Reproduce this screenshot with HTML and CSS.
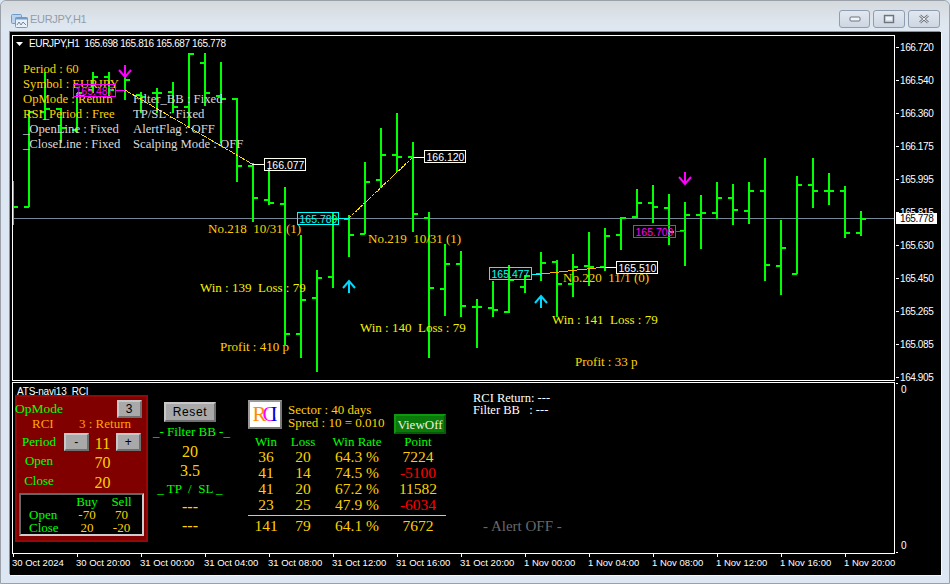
FILE: index.html
```html
<!DOCTYPE html>
<html lang="en">
<head>
<meta charset="utf-8">
<title>EURJPY,H1</title>
<link rel="stylesheet" href="styles.css">
</head>
<body>
<div class="window">
  <header class="titlebar">
    <svg class="app-icon" width="17" height="15" viewBox="0 0 17 15">
      <rect x="0.5" y="1.5" width="10" height="9" rx="1" fill="#b9d3ee" stroke="#6f9cc9"/>
      <rect x="4.5" y="4.5" width="12" height="10" rx="1" fill="#e6f0fa" stroke="#6f9cc9"/>
      <rect x="4.5" y="4.5" width="12" height="2" fill="#6f9cc9"/>
      <path d="M6 12 L8 9 L10 12 L12 9 L15 12" fill="none" stroke="#7b8794"/>
    </svg>
    <span class="title-text">EURJPY,H1</span>
    <div class="win-buttons">
      <div class="win-btn"><svg width="12" height="6" viewBox="0 0 12 6"><rect x="1" y="1" width="10" height="4" rx="1" fill="#f2f4f7" stroke="#6d747c"/></svg></div>
      <div class="win-btn"><svg width="12" height="10" viewBox="0 0 12 10"><rect x="1.5" y="1.5" width="9" height="7" fill="none" stroke="#6d747c" stroke-width="1.4"/><rect x="3" y="3" width="6" height="3" fill="#f2f4f7"/></svg></div>
      <div class="win-btn"><svg width="12" height="10" viewBox="0 0 12 10"><path d="M2 1.5 L10 8.5 M10 1.5 L2 8.5" stroke="#6d747c" stroke-width="2.6"/><path d="M2 1.5 L10 8.5 M10 1.5 L2 8.5" stroke="#f2f4f7" stroke-width="1"/></svg></div>
    </div>
  </header>

  <main class="client">
    <section class="pane pane-main">
      <svg class="chart" width="881" height="344" viewBox="13 36 881 344">
        <path class="price-line" d="M13 218.5H894"/>
        <path class="bars" d="M13 181V225M13 207H18
M29 110V207M24 207H29M29 112H34
M45 72V120M40 112H45M45 109H50
M61 108V143M56 109H61M61 128H66
M77 93V133M72 130H77M77 93H82
M93 72V93M88 90H93M93 77H98
M109 72V97M104 77H109M109 90H114
M125 75V100M125 80H130
M141 92V113M136 95H141M141 97H146
M157 88V113M152 93H157M157 93H162
M173 82V113M168 92H173M173 107H178
M189 53V127M184 107H189M189 54H194
M205 53V106M200 63H205M205 93H210
M221 62V143M216 96H221M221 99H226
M237 98V182M232 99H237M237 166H242
M253 163V222M248 166H253M253 198H258
M269 168V205M264 200H269M269 203H274
M285 187V345M280 204H285M285 334H290
M301 235V358M296 334H301M301 300H306
M317 270V372M312 298H317M317 278H322
M333 213V288M328 277H333M333 219H338
M349 215V257M344 219H349M349 235H354
M365 162V234M360 234H365M365 182H370
M381 128V188M376 180H381M381 155H386
M397 113V172M392 155H397M397 157H402
M413 142V232M408 157H413M413 214H418
M429 212V358M424 218H429M429 288H434
M445 244V316M440 289H445M445 264H450
M461 251V317M456 264H461M461 306H466
M477 299V348M472 307H477M477 307H482
M493 281V317M488 308H493M493 310H498
M509 265V313M504 312H509M509 280H514
M525 275V293M520 287H525M525 276H530
M541 252V281M536 274H541M541 263H546
M557 260V317M552 262H557M557 284H562
M573 254V297M568 284H573M573 267H578
M589 232V286M584 266H589M589 267H594
M605 228V271M600 267H605M605 236H610
M621 217V250M616 235H621M621 218H626
M637 189V218M632 217H637M637 203H642
M653 185V223M648 203H653M653 207H658
M669 194V245M664 208H669M669 232H674
M685 202V266M680 231H685M685 215H690
M701 195V249M696 215H701M701 213H706
M717 182V219M712 213H717M717 198H722
M733 184V225M728 198H733M733 210H738
M749 182V224M744 211H749M749 191H754
M765 158V281M760 191H765M765 265H770
M781 220V295M776 266H781M781 248H786
M797 176V274M792 274H797M797 185H802
M813 158V208M808 185H813M813 191H818
M829 173V205M824 191H829M829 191H834
M845 186V238M840 191H845M845 233H850
M861 211V236M856 233H861M861 219H866"/>

        <path class="trend trend-dotted" d="M125 90L252 164M349 218L413 157"/>
        <path class="trend trend-orange" d="M541 274L605 267"/>
        <path class="lead lead-magenta" d="M115 90.5H125M675 231.5H685"/>
        <path class="lead lead-white" d="M252 164.5H264M413 157.5H424M605 267.5H616"/>
        <path class="lead lead-cyan" d="M339 218.5H349M531 274.5H541"/>

        <path class="arrow arrow-down" d="M125 65V77M119 70L125 77L131 70"/>
        <path class="arrow arrow-down" d="M685 172V184M679 177L685 184L691 177"/>
        <path class="arrow arrow-up" d="M349 293V281M343 288L349 281L355 288"/>
        <path class="arrow arrow-up" d="M541 308V296M535 303L541 296L547 303"/>

        <polygon class="menu-tri" points="16,42 23,42 19.5,46"/>
        <text class="head-text" x="29" y="47">EURJPY,H1  165.698 165.816 165.687 165.778</text>

        <text class="note gold" x="23" y="73">Period : 60</text>
        <text class="note gold" x="23" y="88">Symbol : EURJPY</text>
        <text class="note gold" x="23" y="103">OpMode : Return</text>
        <text class="note gold" x="23" y="118">RSI_Period : Free</text>
        <text class="note silver" x="23" y="133">_OpenLine : Fixed</text>
        <text class="note silver" x="23" y="148">_CloseLine : Fixed</text>
        <text class="note silver" x="133" y="103">Filter_BB : Fixed</text>
        <text class="note silver" x="133" y="118">TP/SL : Fixed</text>
        <text class="note silver" x="133" y="133">AlertFlag : OFF</text>
        <text class="note silver" x="133" y="148">Scalping Mode : OFF</text>

        <rect class="box box-magenta" x="73.5" y="84.5" width="42" height="12"/>
        <text class="box-text tx-magenta" x="75.5" y="95">165.487</text>
        <rect class="box box-white" x="264.5" y="158.5" width="41" height="12"/>
        <text class="box-text tx-white" x="266.5" y="169">166.077</text>
        <rect class="box box-cyan" x="297.5" y="212.5" width="41" height="12"/>
        <text class="box-text tx-cyan" x="299.5" y="223">165.789</text>
        <rect class="box box-white" x="424.5" y="150.5" width="41" height="12"/>
        <text class="box-text tx-white" x="426.5" y="161">166.120</text>
        <rect class="box box-cyan" x="489.5" y="267.5" width="42" height="12"/>
        <text class="box-text tx-cyan" x="491.5" y="278">165.477</text>
        <rect class="box box-white" x="616.5" y="261.5" width="41" height="12"/>
        <text class="box-text tx-white" x="618.5" y="272">165.510</text>
        <rect class="box box-magenta" x="633.5" y="225.5" width="42" height="12"/>
        <text class="box-text tx-magenta" x="635.5" y="236">165.709</text>

        <text class="note amber" x="208" y="233">No.218  10/31 (1)</text>
        <text class="note yellow" x="200" y="292">Win : 139  Loss : 79</text>
        <text class="note amber" x="220" y="351">Profit : 410 p</text>
        <text class="note amber" x="368" y="243">No.219  10/31 (1)</text>
        <text class="note yellow" x="360" y="332">Win : 140  Loss : 79</text>
        <text class="note amber" x="563" y="282">No.220  11/1 (0)</text>
        <text class="note yellow" x="552" y="324">Win : 141  Loss : 79</text>
        <text class="note amber" x="575" y="366">Profit : 33 p</text>
      </svg>
    </section>

    <aside class="price-axis">
      <div class="p-label"><i class="tick"></i><span>166.720</span></div>
      <div class="p-label"><i class="tick"></i><span>166.540</span></div>
      <div class="p-label"><i class="tick"></i><span>166.360</span></div>
      <div class="p-label"><i class="tick"></i><span>166.175</span></div>
      <div class="p-label"><i class="tick"></i><span>165.995</span></div>
      <div class="p-label"><i class="tick"></i><span>165.815</span></div>
      <div class="p-label"><i class="tick"></i><span>165.630</span></div>
      <div class="p-label"><i class="tick"></i><span>165.450</span></div>
      <div class="p-label"><i class="tick"></i><span>165.265</span></div>
      <div class="p-label"><i class="tick"></i><span>165.085</span></div>
      <div class="p-label"><i class="tick"></i><span>164.905</span></div>
      <div class="current-price">165.778</div>
    </aside>

    <section class="pane pane-sub">
      <div class="sub-title">ATS-navi13  RCI</div>

      <div class="control">
        <div class="c-row c-row-mode">
          <span class="c-green c-mode">OpMode</span>
          <button class="gbtn gbtn-mode">3</button>
        </div>
        <div class="c-row c-row-rci">
          <span class="c-orange c-rci">RCI</span>
          <span class="c-orange c-ret">3 : Return</span>
        </div>
        <div class="c-row c-row-period">
          <span class="c-green c-label">Period</span>
          <button class="gbtn gbtn-step">-</button>
          <span class="c-gold c-value">11</span>
          <button class="gbtn gbtn-step">+</button>
        </div>
        <div class="c-row c-row-val">
          <span class="c-green c-label">Open</span>
          <span class="c-gold c-value c-offset">70</span>
        </div>
        <div class="c-row c-row-val">
          <span class="c-green c-label">Close</span>
          <span class="c-gold c-value c-offset">20</span>
        </div>
        <div class="levels">
          <span></span><span class="c-green lv-c">Buy</span><span class="c-green lv-c lv-r">Sell</span>
          <span class="c-green lv-l">Open</span><span class="c-gold lv-c">-70</span><span class="c-gold lv-c lv-r">70</span>
          <span class="c-green lv-l">Close</span><span class="c-gold lv-c">20</span><span class="c-gold lv-c lv-r">-20</span>
        </div>
      </div>

      <div class="filter">
        <button class="gbtn gbtn-reset">Reset</button>
        <div class="c-green f-head">_- Filter BB -_</div>
        <div class="c-gold f-val f-val-first">20</div>
        <div class="c-gold f-val">3.5</div>
        <div class="c-green f-head f-head-tp">_ TP  /  SL _</div>
        <div class="c-gold f-val f-val-dash">---</div>
        <div class="c-gold f-val">---</div>
      </div>

      <div class="stats">
        <div class="stats-top">
          <div class="logo"><span class="l-r">R</span><span class="l-c">C</span><span class="l-i">I</span></div>
          <div class="sector">
            <div>Sector : 40 days</div>
            <div>Spred : 10 = 0.010</div>
          </div>
          <button class="view-btn">ViewOff</button>
        </div>
        <div class="s-grid s-head">
          <span>Win</span><span>Loss</span><span>Win Rate</span><span>Point</span>
        </div>
        <div class="s-grid s-rows">
          <span>36</span><span>20</span><span>64.3 %</span><span>7224</span>
          <span>41</span><span>14</span><span>74.5 %</span><span class="neg">-5100</span>
          <span>41</span><span>20</span><span>67.2 %</span><span>11582</span>
          <span>23</span><span>25</span><span>47.9 %</span><span class="neg">-6034</span>
        </div>
        <div class="s-rule"></div>
        <div class="s-grid s-total">
          <span>141</span><span>79</span><span>64.1 %</span><span>7672</span>
        </div>
      </div>

      <div class="messages">
        <div class="msg">RCI Return: ---</div>
        <div class="msg">Filter BB   : ---</div>
        <div class="alert">- Alert OFF -</div>
      </div>
    </section>

    <aside class="sub-axis">
      <div class="z-label"><i class="tick tick-z"></i><span>0</span></div>
      <div class="z-label z-bottom"><i class="tick tick-z"></i><span>0</span></div>
    </aside>

    <footer class="time-axis">
      <div class="t-cell">30 Oct 2024</div>
      <div class="t-cell">30 Oct 20:00</div>
      <div class="t-cell">31 Oct 00:00</div>
      <div class="t-cell">31 Oct 04:00</div>
      <div class="t-cell">31 Oct 08:00</div>
      <div class="t-cell">31 Oct 12:00</div>
      <div class="t-cell">31 Oct 16:00</div>
      <div class="t-cell">31 Oct 20:00</div>
      <div class="t-cell">1 Nov 00:00</div>
      <div class="t-cell">1 Nov 04:00</div>
      <div class="t-cell">1 Nov 08:00</div>
      <div class="t-cell">1 Nov 12:00</div>
      <div class="t-cell">1 Nov 16:00</div>
      <div class="t-cell">1 Nov 20:00</div>
    </footer>
  </main>
</div>
</body>
</html>
```
FILE: styles.css
```css
* { box-sizing: border-box; }
html, body { margin: 0; padding: 0; background: #dce7f3; overflow: hidden; }

.window {
  width: 950px;
  height: 584px;
  display: flex;
  flex-direction: column;
  background: #dce7f3;
  border: 1px solid #9aa1a9;
  border-radius: 6px 6px 0 0;
  font-family: "Liberation Serif", serif;
}

/* ---------- title bar ---------- */
.titlebar {
  height: 31px;
  flex: none;
  display: flex;
  align-items: flex-start;
  padding: 9px 9px 0 10px;
  background: linear-gradient(#d5d9dd, #dde4ec 60%, #dfe8f2);
  border-radius: 6px 6px 0 0;
}
.app-icon { margin: 3px 2px 0 0; flex: none; }
.title-text {
  font: 11px/16px "Liberation Sans", sans-serif;
  color: #939da7;
  margin-top: 1px;
  letter-spacing: -0.3px;
}
.win-buttons { margin-left: auto; display: flex; gap: 3px; }
.win-btn {
  width: 31px;
  height: 18px;
  display: flex;
  align-items: center;
  justify-content: center;
  border: 1px solid #8f9db0;
  border-radius: 3px;
  background: linear-gradient(#e2e8f0, #cdd6e2);
}
.win-btn + .win-btn { width: 32px; }

/* ---------- client area ---------- */
.client {
  flex: 1;
  margin: 0 8px 8px 9px;
  padding: 3px 0 0 2px;
  background: #000;
  display: grid;
  grid-template-columns: 883px 46px;
  grid-template-rows: 346px 172px 20px;
  row-gap: 0;
  box-shadow: -1px -1px 0 #8594a2, 1px 1px 0 #f6f9fc;
  position: relative;
  color: #fff;
}
.pane { border: 1px solid #fff; }
.pane-main { grid-column: 1; grid-row: 1; }
.pane-sub {
  grid-column: 1;
  grid-row: 2;
  margin-top: 1px;
  height: 172px;
  display: flex;
  align-items: flex-start;
  position: relative;
}

/* ---------- main chart canvas ---------- */
.chart { display: block; }
.price-line { stroke: #778899; stroke-width: 1; fill: none; shape-rendering: crispEdges; }
.bars { stroke: #00ff00; stroke-width: 2; fill: none; shape-rendering: crispEdges; }
.trend { fill: none; stroke-width: 1; shape-rendering: crispEdges; }
.trend-dotted { stroke: #ffe000; stroke-dasharray: 3 1; }
.trend-orange { stroke: #ffb400; }
.lead { fill: none; stroke-width: 1; shape-rendering: crispEdges; }
.lead-magenta { stroke: #ff00ff; }
.lead-white { stroke: #fffff0; }
.lead-cyan { stroke: #00ffff; }
.arrow { fill: none; stroke-width: 2; }
.arrow-down { stroke: #ff00ff; }
.arrow-up { stroke: #00d8ff; }
.menu-tri { fill: #fff; }

.head-text {
  font: 10px "Liberation Sans", sans-serif;
  letter-spacing: -0.37px;
  fill: #fff;
  white-space: pre;
}
.note {
  font: 12.7px "Liberation Serif", serif;
  white-space: pre;
}
.gold { fill: #ffd000; }
.silver { fill: #dadada; }
.amber { fill: #ffd000; font-size: 13px; }
.yellow { fill: #f2f200; font-size: 13px; }

.box { fill: none; stroke-width: 1; shape-rendering: crispEdges; }
.box-magenta { stroke: #ff00ff; }
.box-white { stroke: #fffff0; }
.box-cyan { stroke: #00ffff; }
.box-text { font: 10.5px "Liberation Sans", sans-serif; }
.tx-magenta { fill: #ff00ff; }
.tx-white { fill: #fff; }
.tx-cyan { fill: #00ffff; }

/* ---------- axes ---------- */
.price-axis {
  grid-column: 2;
  grid-row: 1;
  padding-top: 6px;
  display: flex;
  flex-direction: column;
  gap: 20px;
  position: relative;
}
.p-label {
  height: 13px;
  display: flex;
  align-items: center;
  font: 10px/13px "Liberation Sans", sans-serif;
  letter-spacing: -0.4px;
  color: #fff;
}
.tick {
  display: block;
  flex: none;
  width: 3px;
  height: 1px;
  background: #fff;
  margin: 0 1px 0 1px;
}
.current-price {
  position: absolute;
  left: 1px;
  top: 178px;
  width: 41px;
  height: 11px;
  background: #fff;
  color: #000;
  font: 10px/11px "Liberation Sans", sans-serif;
  letter-spacing: -0.4px;
  padding-left: 4px;
}
.sub-axis {
  grid-column: 2;
  grid-row: 2;
  margin-top: 1px;
  display: flex;
  flex-direction: column;
  justify-content: space-between;
  padding-top: 1px;
  font: 10px/14px "Liberation Sans", sans-serif;
}
.z-label { height: 12px; display: flex; align-items: flex-start; }
.tick-z { margin-top: 0; margin-right: 3px; width: 2px; }
.z-bottom { align-items: flex-end; }
.z-bottom .tick-z { margin-bottom: 0; }

.time-axis {
  grid-column: 1 / -1;
  grid-row: 3;
  display: flex;
  font: 9.5px/20px "Liberation Sans", sans-serif;
  color: #fff;
}
.t-cell {
  flex: none;
  width: 64px;
  height: 20px;
  white-space: nowrap;
  position: relative;
  line-height: 20px;
}
.t-cell::before {
  content: "";
  position: absolute;
  left: 1px;
  top: 0;
  width: 1px;
  height: 4px;
  background: #fff;
}

/* ---------- indicator: buttons ---------- */
.gbtn {
  display: block;
  padding: 0;
  background: #a9a9a9;
  border-style: solid;
  border-width: 2px;
  border-color: #c8c8c8 #707070 #707070 #c8c8c8;
  color: #000;
  font: 12px/1 "Liberation Sans", sans-serif;
  letter-spacing: 0.6px;
}
.gbtn-mode { width: 25px; height: 18px; margin-left: auto; margin-right: 4px; }
.gbtn-step { width: 25px; height: 18px; }
.gbtn-reset { width: 52px; height: 20px; margin: 0 auto; }

/* ---------- indicator ---------- */
.sub-title {
  position: absolute;
  left: 4px;
  top: 3px;
  font: 10px/12px "Liberation Sans", sans-serif;
  letter-spacing: -0.2px;
  white-space: pre;
  color: #fff;
}
.c-green { color: #00ff00; }
.c-orange { color: #ffa500; }
.c-gold { color: #ffd000; }

.control {
  flex: none;
  width: 133px;
  height: 147px;
  margin: 12px 0 0 2px;
  padding: 3px 0 0;
  background: #800000;
  border: 2px solid #960808;
  font-size: 13px;
}
.c-row { display: flex; align-items: center; }
.c-row-mode { height: 18px; }
.c-mode { margin-left: -2px; font-size: 13.5px; }
.c-row-rci { height: 12px; }
.c-rci { width: 47px; padding-left: 15px; }
.c-ret { margin-left: 15px; }
.c-row-period { height: 18px; margin-top: 3px; }
.c-label { width: 44px; margin-right: 3px; text-align: center; }
.c-value { width: 27px; text-align: center; font-size: 16px; line-height: 16px; padding-top: 3px; }
.c-offset { margin-left: 25px; }
.c-row-val { height: 20px; }
.levels {
  width: 125px;
  height: 43px;
  margin: 2px 0 0 2px;
  background: #000;
  border-style: solid;
  border-width: 2px;
  border-color: #666 #ccc #ccc #666;
  display: grid;
  grid-template-columns: 48px 36px 37px;
  grid-auto-rows: 13px;
  line-height: 13px;
}
.lv-l { padding-left: 8px; }
.lv-c { text-align: center; }
.lv-r { padding-right: 4px; }

.filter {
  flex: none;
  width: 74px;
  margin: 19px 0 0 5px;
  text-align: center;
  font-size: 13px;
}
.f-head { height: 15px; line-height: 15px; margin-top: 2px; white-space: pre; }
.f-head-tp { margin-top: 1px; }
.f-val { font-size: 16px; height: 19px; line-height: 19px; }
.f-val-first { margin-top: 3px; }
.f-val-dash { margin-top: 1px; }

.stats {
  flex: none;
  width: 198px;
  margin: 17px 0 0 21px;
}
.stats-top { display: flex; align-items: flex-start; height: 35px; }
.logo {
  flex: none;
  width: 34px;
  height: 29px;
  background: #fff;
  border-style: solid;
  border-width: 2px;
  border-color: #999 #777 #777 #999;
  display: flex;
  justify-content: center;
  align-items: center;
  font-size: 21px;
  line-height: 1;
}
.l-r { color: #ff8c00; }
.l-c { color: #ff00ff; margin-left: -4px; }
.l-i { color: #0000e0; margin-left: -6px; }
.sector {
  margin: 3px 0 0 6px;
  font-size: 13px;
  line-height: 13px;
  color: #ffd000;
  white-space: nowrap;
}
.view-btn {
  margin: 14px 0 0 auto;
  width: 52px;
  height: 20px;
  padding: 0;
  background: #0a7a0a;
  border: 2px solid #08a008;
  border-color: #0d9a0d #045c04 #045c04 #0d9a0d;
  color: #f0f0e0;
  font: 13px/1 "Liberation Serif", serif;
}
.s-grid {
  display: grid;
  grid-template-columns: 36px 38px 70px 52px;
  text-align: center;
}
.s-head { height: 14px; line-height: 14px; font-size: 13px; color: #00ff00; }
.s-rows {
  grid-auto-rows: 16px;
  line-height: 16px;
  font-size: 15.5px;
  color: #ffd000;
}
.neg { color: #ff0000; }
.s-rule { height: 1px; margin-top: 2px; background: #ffd000; }
.s-total { height: 20px; line-height: 20px; font-size: 15.5px; color: #ffd000; }

.messages {
  flex: none;
  margin: 9px 0 0 27px;
  font-size: 12.5px;
  line-height: 12px;
  color: #fff;
}
.msg { white-space: pre; }
.alert {
  margin: 101px 0 0 10px;
  font-size: 15px;
  line-height: 18px;
  color: #696969;
  white-space: nowrap;
}
```
